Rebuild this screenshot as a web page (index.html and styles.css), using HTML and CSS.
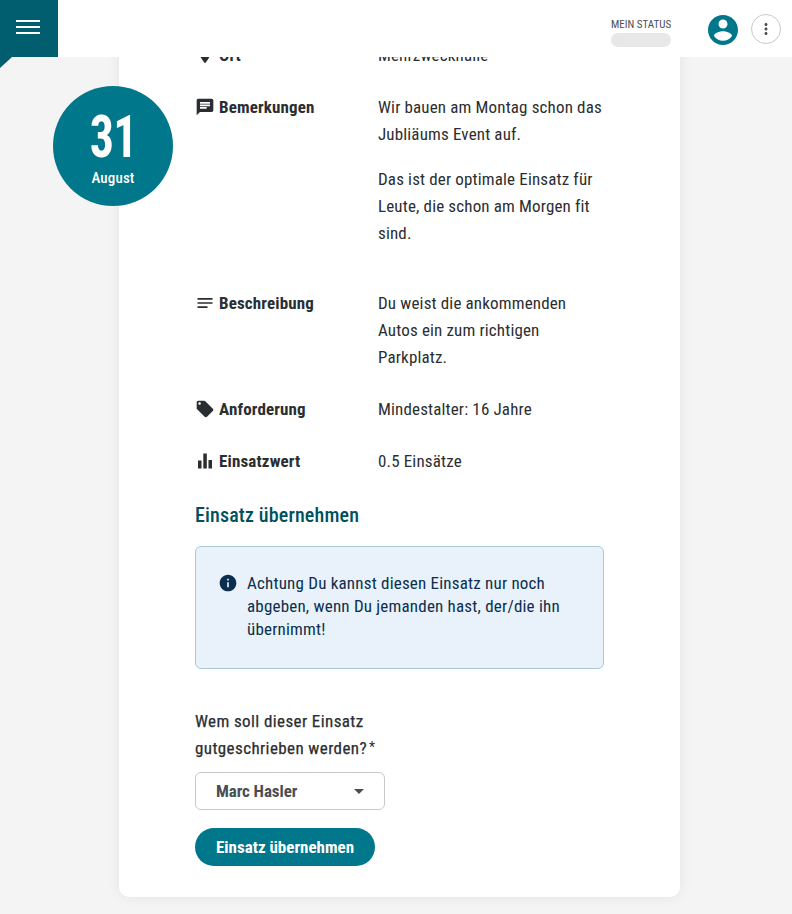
FILE: index.html
```html
<!DOCTYPE html>
<html lang="de">
<head>
<meta charset="utf-8">
<title>Einsatz</title>
<link rel="stylesheet" href="styles.css">
</head>
<body>
<header class="topbar">
  <div class="menu-tab">
    <span class="menu-line"></span><span class="menu-line"></span><span class="menu-line"></span>
  </div>
  <div class="actions">
    <div class="status">
      <span class="status-label">MEIN STATUS</span>
      <span class="status-pill"></span>
    </div>
    <svg class="avatar" viewBox="0 0 24 24"><path fill="#00778b" d="M12 2C6.48 2 2 6.48 2 12s4.48 10 10 10 10-4.48 10-10S17.52 2 12 2zm0 3c1.66 0 3 1.34 3 3s-1.34 3-3 3-3-1.34-3-3 1.34-3 3-3zm0 14.2c-2.5 0-4.71-1.28-6-3.22.03-1.99 4-3.08 6-3.08 1.99 0 5.97 1.09 6 3.08-1.29 1.94-3.5 3.22-6 3.22z"/></svg>
    <div class="more">
      <svg class="more-icon" viewBox="0 0 24 24"><path fill="#4a4f54" d="M12 8c1.1 0 2-.9 2-2s-.9-2-2-2-2 .9-2 2 .9 2 2 2zm0 2c-1.1 0-2 .9-2 2s.9 2 2 2 2-.9 2-2-.9-2-2-2zm0 6c-1.1 0-2 .9-2 2s.9 2 2 2 2-.9 2-2-.9-2-2-2z"/></svg>
    </div>
  </div>
</header>
<div class="tab-fold"></div>

<main class="page">
  <div class="date-badge">
    <span class="date-day">31</span>
    <span class="date-month">August</span>
  </div>
  <article class="card">
    <div class="row">
      <div class="label"><svg class="icon" viewBox="0 0 24 24"><path d="M12 2C8.13 2 5 5.13 5 9c0 5.25 7 13 7 13s7-7.75 7-13c0-3.87-3.13-7-7-7z"/></svg>Ort</div>
      <div class="value"><p>Mehrzweckhalle</p></div>
    </div>
    <div class="row row-notes">
      <div class="label"><svg class="icon" viewBox="0 0 24 24"><path d="M20 2H4c-1.1 0-1.99.9-1.99 2L2 22l4-4h14c1.1 0 2-.9 2-2V4c0-1.1-.9-2-2-2zM6 9h12v2H6V9zm8 5H6v-2h8v2zm4-6H6V6h12v2z"/></svg>Bemerkungen</div>
      <div class="value">
        <p>Wir bauen am Montag schon das Jubliäums Event auf.</p>
        <p>Das ist der optimale Einsatz für Leute, die schon am Morgen fit sind.</p>
      </div>
    </div>
    <div class="row">
      <div class="label"><svg class="icon" viewBox="0 0 24 24"><path d="M3 18h12v-2H3v2zM3 6v2h18V6H3zm0 7h18v-2H3v2z"/></svg>Beschreibung</div>
      <div class="value"><p>Du weist die ankommenden Autos ein zum richtigen Parkplatz.</p></div>
    </div>
    <div class="row">
      <div class="label"><svg class="icon" viewBox="0 0 24 24"><path d="M21.41 11.58l-9-9C12.05 2.22 11.55 2 11 2H4c-1.1 0-2 .9-2 2v7c0 .55.22 1.05.59 1.42l9 9c.36.36.86.58 1.41.58.55 0 1.05-.22 1.41-.59l7-7c.37-.36.59-.86.59-1.41 0-.55-.23-1.06-.59-1.42zM5.5 7C4.67 7 4 6.33 4 5.5S4.67 4 5.5 4 7 4.67 7 5.5 6.33 7 5.500 7z"/></svg>Anforderung</div>
      <div class="value"><p>Mindestalter: 16 Jahre</p></div>
    </div>
    <div class="row">
      <div class="label"><svg class="icon" viewBox="0 0 20 20"><path d="M3 9.500h3.500v8H3zM8.300 2.500h3.500v15H8.300zM13.500 9h3.500v8.500h-3.500z"/></svg>Einsatzwert</div>
      <div class="value"><p>0.5 Einsätze</p></div>
    </div>

    <h2 class="section-title">Einsatz übernehmen</h2>

    <div class="alert">
      <svg class="alert-icon" viewBox="0 0 24 24"><path d="M12 2C6.48 2 2 6.48 2 12s4.48 10 10 10 10-4.48 10-10S17.52 2 12 2zm1 15h-2v-6h2v6zm0-8h-2V7h2v2z"/></svg>
      <p class="alert-text">Achtung Du kannst diesen Einsatz nur noch abgeben, wenn Du jemanden hast, der/die ihn übernimmt!</p>
    </div>

    <label class="field-label">Wem soll dieser Einsatz gutgeschrieben werden?<sup class="req">*</sup></label>
    <div class="select">
      <span>Marc Hasler</span>
      <span class="caret"></span>
    </div>
    <button class="primary" type="button">Einsatz übernehmen</button>
  </article>
</main>
</body>
</html>
```
FILE: styles.css
```css
* { box-sizing: border-box; }
html, body { margin: 0; height: 914px; overflow: hidden; }
body {
  background: #f4f4f4;
  font-family: "Roboto Condensed", "Roboto", "Liberation Sans", sans-serif;
  font-size: 17px;
  letter-spacing: .15px;
  color: #2b2e31;
  position: relative;
}
.topbar {
  position: absolute; top: 0; left: 0; right: 0; height: 57px;
  background: #fff; z-index: 5;
  display: flex; align-items: flex-start; justify-content: space-between;
  padding-right: 11px;
}
.menu-tab {
  width: 58px; height: 57px; background: #005e6e;
  display: flex; flex-direction: column; justify-content: center; align-items: center; gap: 4px;
  padding: 0 2px 3px 0;
}
.menu-line { width: 24px; height: 2px; background: #fff; }
.tab-fold {
  position: absolute; left: 0; top: 57px; width: 12px; height: 11px; z-index: 5;
  background: #005e6e; clip-path: polygon(0 0, 100% 0, 0 100%);
}
.actions { display: flex; align-items: center; padding-top: 10px; }
.status { width: 60px; margin-right: 34px; display: flex; flex-direction: column; margin-top: 5px; }
.status-label { font-size: 11px; line-height: 16px; color: #4a4f54; white-space: nowrap; letter-spacing: 0; }
.status-pill { height: 14px; border-radius: 7px; background: #e8e8e8; }
.avatar { width: 36px; height: 36px; margin: 2px 10px 0 0; display: block; }
.more {
  width: 30px; height: 30px; border: 1px solid #c9c9c9; border-radius: 50%;
  display: flex; align-items: center; justify-content: center;
}
.more-icon { width: 18px; height: 18px; }

.page {
  height: 914px; padding: 0 112px 17px 119px;
  display: flex; flex-direction: column; justify-content: flex-end;
  position: relative;
}
.date-badge {
  position: absolute; left: 53px; top: 86px; width: 120px; height: 120px; border-radius: 50%;
  background: #00778b; color: #fff; z-index: 2;
  display: flex; flex-direction: column; align-items: center;
}
.date-day { font-size: 60px; line-height: 46px; font-weight: 700; margin-top: 28px; letter-spacing: -1px; transform: scaleX(.8); }
.date-month { font-size: 15px; line-height: 18px; margin-top: 9px; font-weight: 500; }
.card {
  background: #fff; border-radius: 0 0 10px 10px; padding: 0 76px 31px;
  box-shadow: 0 0 14px rgba(0,0,0,.07);
  flex: none;
}
.row { display: grid; grid-template-columns: 183px 226px; padding-bottom: 25px; line-height: 27px; }
.row-notes { padding-bottom: 43px; }
.label { font-weight: 700; display: flex; align-items: flex-start; }
.icon { width: 20px; height: 20px; margin: 3px 4px 0 0; fill: #2b2e31; flex: none; }
.value p { margin: 0 0 18px; }
.value p:last-child { margin-bottom: 0; }
.section-title { margin: 0 0 16px; font-size: 20px; line-height: 30px; font-weight: 500; color: #00505c; letter-spacing: .15px; }
.alert {
  background: #e9f2fa; border: 1px solid #a9c8de; border-radius: 6px;
  height: 123px; padding: 25px 40px 0 22px; display: flex; gap: 9px; color: #0b2e4f;
  margin-bottom: 39px;
}
.alert-icon { width: 20px; height: 20px; fill: #0b2e4f; flex: none; margin-top: 1px; }
.alert-text { margin: 0; line-height: 23px; letter-spacing: .2px; }
.field-label { display: block; width: 190px; line-height: 27px; font-weight: 400; letter-spacing: .4px; -webkit-text-stroke: .25px #2b2e31; }
.req { font-size: 14px; line-height: 0; margin-left: 2px; font-weight: 400; vertical-align: 2px; -webkit-text-stroke: 0; }
.select {
  width: 190px; height: 38px; margin-top: 10px; border: 1px solid #c9c9c9; border-radius: 6px;
  display: flex; align-items: center; justify-content: space-between;
  padding: 0 20px; font-weight: 700; color: #4a4f54; letter-spacing: -.1px;
}
.caret { width: 0; height: 0; border: 5px solid transparent; border-top-color: #4a4f54; border-bottom: 0; }
.primary {
  display: block; width: 180px; height: 38px; margin-top: 18px; border: 0; border-radius: 19px;
  background: #00778b; color: #fff; font: inherit; font-weight: 700; padding: 0;
}
```
